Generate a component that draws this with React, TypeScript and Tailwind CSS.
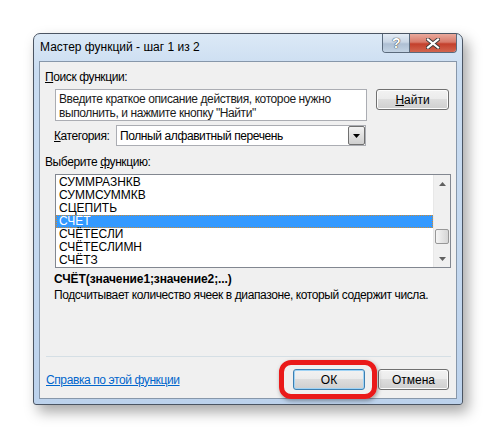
import React from "react";

const items = [
  "СУММРАЗНКВ",
  "СУММСУММКВ",
  "СЦЕПИТЬ",
  "СЧЁТ",
  "СЧЁТЕСЛИ",
  "СЧЁТЕСЛИМН",
  "СЧЁТЗ",
];

function Win7Button({
  children,
  focused,
  className = "",
}: {
  children: React.ReactNode;
  focused?: boolean;
  className?: string;
}) {
  return (
    <div
      className={`flex h-[21px] items-center justify-center rounded-[3px] border ${
        focused
          ? "border-[#3c7fb1] shadow-[inset_0_0_0_1px_#9fd3f5]"
          : "border-[#707070] shadow-[inset_0_0_0_1px_#fcfcfc]"
      } bg-[linear-gradient(#f2f2f2_0%,#ebebeb_49%,#dddddd_50%,#cfcfcf_100%)] ${className}`}
    >
      {children}
    </div>
  );
}

function TitleButtons() {
  return (
    <div className="flex h-[19px] overflow-hidden rounded-b-[4px] border border-t-0 border-[#5a6a7c]">
      <div className="flex w-[27px] items-center justify-center border-r border-[#5a6a7c] bg-[linear-gradient(#e4ecf5_0%,#c9d6e5_45%,#aebfd3_55%,#c3d3e4_100%)]">
        <span className="text-[14px] font-bold leading-none text-white [text-shadow:0_0_1px_#333,0_0_1px_#333]">
          ?
        </span>
      </div>
      <div className="flex w-[46px] items-center justify-center bg-[linear-gradient(#e9a99c_0%,#d87a6a_45%,#c3402c_55%,#d2654f_100%)]">
        <svg width="14" height="11" viewBox="0 0 14 11">
          <path
            d="M2 1.5 L12 9.5 M12 1.5 L2 9.5"
            stroke="#3a3a3a"
            strokeWidth="4"
            strokeLinecap="square"
          />
          <path
            d="M2 1.5 L12 9.5 M12 1.5 L2 9.5"
            stroke="#ffffff"
            strokeWidth="2.2"
            strokeLinecap="square"
          />
        </svg>
      </div>
    </div>
  );
}

function Scrollbar() {
  return (
    <div className="flex w-[17px] flex-col border-l border-[#e8e8e8] bg-[#f0f0f0]">
      <div className="flex h-[17px] items-center justify-center">
        <svg width="7" height="4" viewBox="0 0 7 4">
          <path d="M0 4 L3.5 0 L7 4 Z" fill="#606060" />
        </svg>
      </div>
      <div className="h-[37px]" />
      <div className="mx-[1px] h-[15px] rounded-[2px] border border-[#979797] bg-[linear-gradient(90deg,#f5f5f5,#e2e2e2_60%,#d6d6d6)]" />
      <div className="flex-1" />
      <div className="flex h-[17px] items-center justify-center">
        <svg width="7" height="4" viewBox="0 0 7 4">
          <path d="M0 0 L7 0 L3.5 4 Z" fill="#606060" />
        </svg>
      </div>
    </div>
  );
}

export default function App() {
  return (
    <div className="min-h-[439px] w-[497px] bg-white pl-[33px] pt-[33px] font-['Liberation_Sans',Arial,sans-serif] text-[12px] leading-[14px] tracking-[-0.4px] text-black">
      <div className="flex h-[372px] w-[430px] flex-col rounded-t-[7px] rounded-b-[3px] border border-[#4b5563] bg-[linear-gradient(180deg,#dce9f6_0%,#c9dcf1_10%,#c4d8ef_60%,#bcd2ec_100%)] shadow-[5px_7px_14px_rgba(0,0,0,0.35)]">
        {/* title bar */}
        <div className="flex h-[27px] shrink-0 items-start justify-between pr-[5px]">
          <span className="whitespace-nowrap pl-[6px] pt-[6px] text-[12px] leading-[14px] tracking-normal text-black">
            Мастер функций - шаг 1 из 2
          </span>
          <TitleButtons />
        </div>

        {/* client area */}
        <div className="relative mx-[5px] mb-[5px] flex flex-1 flex-col border border-[#8797aa] bg-[#f0f0f0]">
          <div className="ml-[5px] mt-[8px] h-[14px]">
            <span className="underline">П</span>оиск функции:
          </div>

          <div className="ml-[15px] mt-[5px] flex items-start">
            <div className="h-[32px] w-[312px] whitespace-nowrap border border-[#abadb3] bg-white pl-[3px] pt-[2px] text-[#1a1a1a]">
              Введите краткое описание действия, которое нужно
              <br />
              выполнить, и нажмите кнопку "Найти"
            </div>
            <Win7Button className="ml-[9px] w-[73px] tracking-normal">
              <span>
                <span className="underline">Н</span>айти
              </span>
            </Win7Button>
          </div>

          <div className="ml-[14px] mt-[4px] flex items-center">
            <div className="w-[62px]">
              <span className="underline">К</span>атегория:
            </div>
            <div className="flex h-[21px] w-[250px] items-center border border-[#abadb3] bg-white">
              <span className="flex-1 pl-[3px]">Полный алфавитный перечень</span>
              <div className="flex h-[19px] w-[17px] items-center justify-center rounded-[2px] border border-[#707070] bg-[linear-gradient(#f2f2f2,#e0e0e0_50%,#cfcfcf)]">
                <svg width="7" height="4" viewBox="0 0 7 4">
                  <path d="M0 0 L7 0 L3.5 4 Z" fill="#000" />
                </svg>
              </div>
            </div>
          </div>

          <div className="ml-[5px] mt-[9px] h-[14px]">
            Выберите <span className="underline">ф</span>ункцию:
          </div>

          <div className="ml-[15px] mt-[5px] flex h-[94px] w-[396px] border border-[#828790] bg-white tracking-normal">
            <div className="flex-1 pt-[1px]">
              {items.map((name) =>
                name === "СЧЁТ" ? (
                  <div
                    key={name}
                    className="h-[13px] border border-dotted border-[#d08a30] bg-[#3399ff] pl-[2px] text-[12px] leading-[11px] text-white"
                  >
                    {name}
                  </div>
                ) : (
                  <div key={name} className="h-[13px] pl-[3px] text-[12px] leading-[13px]">
                    {name}
                  </div>
                )
              )}
            </div>
            <Scrollbar />
          </div>

          <div className="ml-[14px] mt-[4px] h-[14px] whitespace-nowrap font-bold tracking-[-0.1px]">
            СЧЁТ(значение1;значение2;...)
          </div>
          <div className="ml-[14px] mt-[2px] h-[14px] whitespace-nowrap">
            Подсчитывает количество ячеек в диапазоне, который содержит числа.
          </div>

          <div className="ml-[6px] mt-[54px] h-px w-[405px] bg-[#d5dfe5]" />

          <div className="ml-[6px] mt-[12px] flex items-center">
            <span className="w-[247px] text-[#0066cc] underline">
              Справка по этой функции
            </span>
            <Win7Button focused className="w-[72px] tracking-normal">
              ОК
            </Win7Button>
            <Win7Button className="ml-[13px] w-[71px] tracking-normal">Отмена</Win7Button>
          </div>

          {/* red highlight annotation */}
          <div className="absolute left-[239px] top-[298px] h-[39px] w-[98px] rounded-[12px] border-[5px] border-[#ea1a1a] shadow-[1px_2px_4px_rgba(0,0,0,0.35)]" />
        </div>
      </div>
    </div>
  );
}
